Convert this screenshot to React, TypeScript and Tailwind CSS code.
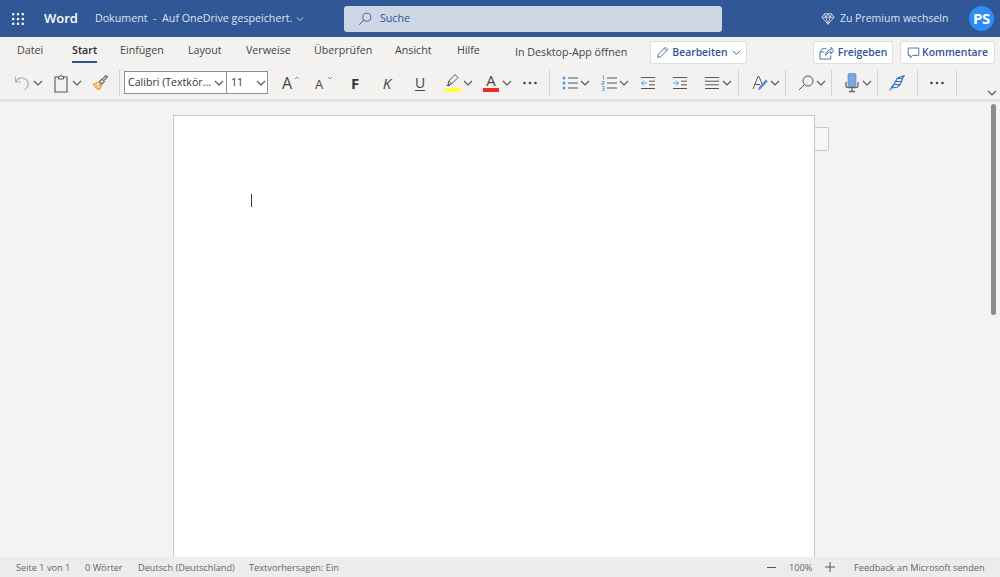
import React from 'react';

const font = { fontFamily: '"Open Sans", "Noto Sans", sans-serif' };

const Svg: React.FC<{ className?: string; children: React.ReactNode }> = ({ className = '', children }) => (
  <svg viewBox="0 0 16 16" fill="none" className={`w-4 h-4 shrink-0 ${className}`}>{children}</svg>
);

const Chev: React.FC<{ className?: string }> = ({ className = '' }) => (
  <svg viewBox="0 0 10 10" fill="none" className={`w-[10px] h-[10px] shrink-0 ${className}`}>
    <path d="M1 3l4 4 4-4" stroke="#555" strokeWidth="1.1" />
  </svg>
);

const Sep: React.FC<{ className?: string }> = ({ className = '' }) => (
  <div className={`w-px h-[26px] shrink-0 bg-[#d4d3d1] ${className}`} />
);

const Dots: React.FC<{ className?: string }> = ({ className = '' }) => (
  <Svg className={className}>
    <circle cx="2.5" cy="8" r="1.3" fill="#444" />
    <circle cx="8" cy="8" r="1.3" fill="#444" />
    <circle cx="13.5" cy="8" r="1.3" fill="#444" />
  </Svg>
);

const Tab: React.FC<{ label: string; className: string; active?: boolean }> = ({ label, className, active }) => (
  <div className={`shrink-0 text-[10.7px] leading-[16px] whitespace-nowrap ${active ? 'font-semibold text-[#2b2b2b]' : 'text-[#444]'} ${className}`}>
    <span className="relative inline-block">
      {label}
      {active && <span className="absolute left-0 right-0 top-[19px] h-[2px] bg-[#2f5597]" />}
    </span>
  </div>
);

const Lines: React.FC<{ x?: number }> = ({ x = 1 }) => (
  <>
    <path d="M1 2.5h14M1 13.5h14" stroke="#555" strokeWidth="1" />
    <path d={`M${x} 6.2h${15 - x}M${x} 9.8h${15 - x}`} stroke="#555" strokeWidth="1" />
  </>
);

export default function App() {
  return (
    <div className="w-[1000px] h-[577px] flex flex-col overflow-hidden bg-[#f3f3f3]" style={font}>
      {/* title bar */}
      <div className="h-[37px] shrink-0 bg-[#325796] flex items-center text-white">
        <svg viewBox="0 0 12 12" className="w-3 h-3 ml-3 shrink-0" fill="#fff">
          {[1.2, 6, 10.8].map(y => [1.2, 6, 10.8].map(x => <rect key={`${x}-${y}`} x={x - 1.1} y={y - 1.1} width="2.2" height="2.2" />))}
        </svg>
        <span className="ml-[20px] text-[13px] font-semibold leading-none">Word</span>
        <span className="ml-[17px] w-[198px] text-[10.7px] text-[#dbe3f0] whitespace-pre">Dokument  -  Auf OneDrive gespeichert.</span>
        <svg viewBox="0 0 10 10" fill="none" className="w-2 h-2 ml-[3px] shrink-0"><path d="M1 3l4 4 4-4" stroke="#dbe3f0" strokeWidth="1.1" /></svg>
        <div className="ml-[40px] w-[378px] h-[26px] rounded-[3px] bg-[#ced6e3] flex items-center shrink-0">
          <svg viewBox="0 0 16 16" fill="none" className="w-[14px] h-[14px] ml-[14px]">
            <circle cx="10" cy="6" r="4.6" stroke="#2f5597" strokeWidth="1" />
            <path d="M6.6 9.4L1.5 14.5" stroke="#2f5597" strokeWidth="1" />
          </svg>
          <span className="ml-[8px] text-[10.7px] text-[#2f5597]">Suche</span>
        </div>
        <svg viewBox="0 0 16 16" fill="none" className="w-[14px] h-[14px] ml-[99px] shrink-0">
          <path d="M4 2h8l3 4-7 8-7-8zM1 6h14M5.500 6L8 14l2.500-8M4 2l1.500 4L8 2l2.500 4L12 2" stroke="#e6ebf4" strokeWidth="0.9" />
        </svg>
        <span className="ml-[5px] w-[109px] text-[10.5px] text-[#dbe3f0] whitespace-nowrap">Zu Premium wechseln</span>
        <div className="ml-[20px] w-[25px] h-[25px] rounded-full bg-[#2f8cf5] flex items-center justify-center text-[15px] font-bold tracking-[-0.5px] shrink-0">PS</div>
      </div>

      {/* tabs */}
      <div className="h-[29px] shrink-0 bg-[#f3f2f1] flex items-start pt-[5px] pl-[17px]">
        <Tab label="Datei" className="w-[55px]" />
        <Tab label="Start" className="w-[48px]" active />
        <Tab label="Einfügen" className="w-[68px]" />
        <Tab label="Layout" className="w-[58px]" />
        <Tab label="Verweise" className="w-[68px]" />
        <Tab label="Überprüfen" className="w-[81px]" />
        <Tab label="Ansicht" className="w-[62px]" />
        <Tab label="Hilfe" className="w-[58px]" />
        <Tab label="In Desktop-App öffnen" className="w-[135px] mt-[2px]" />
        <div className="mt-[-1px] w-[97px] h-[23px] bg-white border border-[#dedede] rounded-[2px] flex items-center justify-center text-[10.4px] font-semibold text-[#2f5597] shrink-0">
          <svg viewBox="0 0 16 16" fill="none" className="w-[13px] h-[13px] mr-[3px]">
            <path d="M2 14l1-4 8.500-8.500 3 3L6 13z M10 3l3 3" stroke="#2f5597" strokeWidth="1" />
          </svg>
          Bearbeiten
          <svg viewBox="0 0 10 10" fill="none" className="w-[9px] h-[9px] ml-[4px]"><path d="M1 3l4 4 4-4" stroke="#2f5597" strokeWidth="1" /></svg>
        </div>
        <div className="ml-[66px] mt-[-1px] w-[80px] h-[23px] bg-white border border-[#dedede] rounded-[2px] flex items-center justify-center text-[10.4px] font-semibold text-[#2f5597] shrink-0">
          <svg viewBox="0 0 16 16" fill="none" className="w-[15px] h-[15px] mr-[4px]">
            <path d="M8 4H3.500L1 7.500V15h11.500v-4M1 7.500h4.500" stroke="#2f5597" strokeWidth="0.9" />
            <path d="M7 11c0-3.500 2.500-6 6-6V2.500L15.500 6 13 9.500V7.500c-2.500 0-4.500 1-6 3.500z" stroke="#2f5597" strokeWidth="0.9" />
          </svg>
          Freigeben
        </div>
        <div className="ml-[7px] mt-[-1px] w-[95px] h-[23px] bg-white border border-[#dedede] rounded-[2px] flex items-center justify-center text-[10.4px] font-semibold text-[#2f5597] shrink-0">
          <svg viewBox="0 0 16 16" fill="none" className="w-[13px] h-[13px] mr-[2px]">
            <path d="M1.500 2.500h13v9H7L4 14.500v-3H1.500z" stroke="#2f5597" strokeWidth="1" />
          </svg>
          Kommentare
        </div>
      </div>

      {/* ribbon */}
      <div className="h-[36px] shrink-0 bg-[#f3f2f1] border-b-[3px] border-[#e3e2e0] flex items-center pl-[14px]">
        <Svg>
          <path d="M1.500 1.500V7H7M1.800 7C3.500 3.500 6 2.500 9 3c4 .7 6 4.500 5 7.500-.5 1.800-2 3.500-3.500 4.500" stroke="#b3b1af" strokeWidth="1.200" />
        </Svg>
        <Chev className="ml-[3px]" />
        <svg viewBox="0 0 16 20" fill="none" className="w-[16px] h-[20px] ml-[10px] shrink-0">
          <path d="M5 4H2v15h12V4h-3" stroke="#555" strokeWidth="1.100" />
          <path d="M5.500 6V3.500h1.500c0-2 2-2 2 0h1.500V6z" stroke="#555" strokeWidth="1" />
        </svg>
        <Chev className="ml-[3px]" />
        <Svg className="ml-[10px]">
          <path d="M.5 9l6-2.500 4 4L7.500 15.500C4.500 14.500 2 12 .5 9z" fill="#f2a33c" />
          <path d="M2.500 10.500l4.500-1.500-2 4M5.500 8l2 5" stroke="#fff" strokeWidth="0.800" />
          <path d="M7.500 6.500l2.500-2.500 2.500 2.500L10 9zM11 3.500l3-3 1.500 1.500-3 3" stroke="#666" strokeWidth="1.100" />
        </Svg>
        <Sep className="ml-[11px]" />
        <div className="ml-[4px] w-[103px] h-[23px] bg-white border border-[#8f8f8f] flex items-center justify-between pl-[3px] pr-[2px] text-[10.6px] text-[#333] whitespace-nowrap shrink-0">
          <span>Calibri (Textkör...</span>
          <Chev />
        </div>
        <div className="ml-[-1px] w-[42px] h-[23px] bg-white border border-[#8f8f8f] flex items-center justify-between pl-[4px] pr-[1px] text-[10.6px] text-[#333] shrink-0">
          <span>11</span>
          <Chev />
        </div>
        <div className="ml-[14px] w-[18px] h-4 relative shrink-0 text-[16px] leading-4 text-[#444]">
          A
          <svg viewBox="0 0 6 4" fill="none" className="absolute right-0 top-[1px] w-[6px] h-[4px]"><path d="M1 3l2-2 2 2" stroke="#5a9bd8" strokeWidth="1" /></svg>
        </div>
        <div className="ml-[15px] w-[18px] h-4 relative shrink-0 text-[13px] leading-[18px] text-[#444]">
          A
          <svg viewBox="0 0 6 4" fill="none" className="absolute right-0 top-[1px] w-[6px] h-[4px]"><path d="M1 1l2 2 2-2" stroke="#5a9bd8" strokeWidth="1" /></svg>
        </div>
        <span className="ml-[14px] w-4 text-center text-[15px] font-bold leading-4 text-[#333] shrink-0">F</span>
        <span className="ml-[16px] w-4 text-center text-[15px] italic leading-4 text-[#444] shrink-0">K</span>
        <span className="ml-[17px] w-4 text-center text-[14px] leading-4 text-[#444] underline underline-offset-2 shrink-0">U</span>
        <div className="ml-[17px] w-4 h-[19px] flex flex-col items-center justify-between shrink-0">
          <svg viewBox="0 0 16 13" fill="none" className="w-4 h-[13px]">
            <path d="M3 11.500l.8-3.500L10 1.500l3 3-6.500 6.500z M3.800 8l3 3M1.500 12.500h3.500" stroke="#555" strokeWidth="1" />
          </svg>
          <div className="w-4 h-[4px] bg-[#ffff3d]" />
        </div>
        <Chev className="ml-[2px]" />
        <div className="ml-[10px] w-4 h-[19px] flex flex-col items-center justify-between shrink-0">
          <span className="text-[15px] leading-[15px] text-[#444]">A</span>
          <div className="w-4 h-[4px] bg-[#ee2a24]" />
        </div>
        <Chev className="ml-[3px]" />
        <Dots className="ml-[10px]" />
        <Sep className="ml-[11px]" />
        <Svg className="ml-[12px]">
          <circle cx="2" cy="3" r="1.500" fill="#4f9be0" />
          <circle cx="2" cy="8" r="1.500" fill="#4f9be0" />
          <circle cx="2" cy="13" r="1.500" fill="#4f9be0" />
          <path d="M6 3h10M6 8h10M6 13h10" stroke="#555" strokeWidth="1" />
        </Svg>
        <Chev className="ml-[2px]" />
        <Svg className="ml-[11px]">
          <path d="M1.500 1l1-.5v4M.8 6.500h2.400v1.500H.8v1.500h2.500M.8 11.500h2.400v4H.8M1.500 13.500h1.700" stroke="#4f9be0" strokeWidth="0.800" />
          <path d="M6 3h10M6 8h10M6 13h10" stroke="#555" strokeWidth="1" />
        </Svg>
        <Chev className="ml-[2px]" />
        <Svg className="ml-[11px]">
          <Lines x={9} />
          <path d="M7 8H1.500M4 5.500L1.500 8 4 10.500" stroke="#4f9be0" strokeWidth="1" />
        </Svg>
        <Svg className="ml-[16px]">
          <Lines x={9} />
          <path d="M1 8h5.500M4 5.500L6.500 8 4 10.500" stroke="#4f9be0" strokeWidth="1" />
        </Svg>
        <Svg className="ml-[16px]">
          <Lines />
        </Svg>
        <Chev className="ml-[2px]" />
        <Sep className="ml-[6px]" />
        <Svg className="ml-[13px]">
          <path d="M1 14L6 1.500h1L11 11M3 9.500h5" stroke="#555" strokeWidth="1" />
          <path d="M6 15.500l1-3.500 7-7.500 1.800 1.800-7 7.500z" fill="#4f8fd0" />
        </Svg>
        <Chev className="ml-[2px]" />
        <Sep className="ml-[5px]" />
        <Svg className="ml-[12px]">
          <circle cx="10" cy="6" r="5" stroke="#555" strokeWidth="1" />
          <path d="M6.400 9.600L1 15" stroke="#555" strokeWidth="1" />
        </Svg>
        <Chev className="ml-[2px]" />
        <Sep className="ml-[5px]" />
        <svg viewBox="0 0 16 20" fill="none" className="w-4 h-5 ml-[12px] shrink-0">
          <rect x="4" y="0.500" width="8" height="13" rx="1.500" fill="#78a9e0" stroke="#4d7fb8" strokeWidth="0.600" />
          <path d="M2 9v3.500c0 1 1 2 2 2h8c1 0 2-1 2-2V9M8 14.500V18M5 18.500h6" stroke="#666" strokeWidth="1.300" />
        </svg>
        <Chev className="ml-[2px]" />
        <Sep className="ml-[5px]" />
        <Svg className="ml-[11px]">
          <path d="M.8 15.500L4 10" stroke="#2f6fc4" strokeWidth="1.100" />
          <path d="M3 13L8.500 3 15 .8 13.500 3.500H8M13.500 3.500l-1 3H6.500M12.500 6.500l-1.500 3H5M11 9.500l-2.500 2.500L3 13" stroke="#2f6fc4" strokeWidth="1.200" />
        </Svg>
        <Sep className="ml-[12px]" />
        <Dots className="ml-[11px]" />
        <Sep className="ml-[11px]" />
        <Chev className="ml-[30px] mt-[20px]" />
      </div>

      {/* document area */}
      <div className="relative flex-1 min-h-0 flex items-start pl-[173px] pt-[13px] overflow-hidden">
        <div className="w-[642px] h-[600px] shrink-0 bg-white border border-[#c6c6c6] pl-[77px] pt-[78px]">
          <div className="w-px h-[13px] bg-[#333]" />
        </div>
        <div className="w-[14px] h-[24px] mt-[12px] shrink-0 bg-[#f6f6f6] border border-l-0 border-[#c9c9c9] rounded-r-[2px]" />
        <div className="absolute right-[4px] top-[2px] w-[5px] h-[211px] rounded-full bg-[#8b8b8b]" />
      </div>

      {/* status bar */}
      <div className="h-[20px] shrink-0 bg-[#ececec] flex items-center pt-[1px] text-[9.2px] text-[#666] whitespace-nowrap">
        <span className="ml-[16px] w-[55px]">Seite 1 von 1</span>
        <span className="ml-[14px] w-[39px]">0 Wörter</span>
        <span className="ml-[14px] w-[97px]">Deutsch (Deutschland)</span>
        <span className="ml-[14px]">Textvorhersagen: Ein</span>
        <div className="ml-auto flex items-center">
          <div className="w-[9px] h-px bg-[#555]" />
          <span className="ml-[13px] w-[24px]">100%</span>
          <svg viewBox="0 0 10 10" className="ml-[12px] w-[10px] h-[10px]" fill="none"><path d="M5 0v10M0 5h10" stroke="#555" strokeWidth="1" /></svg>
          <span className="ml-[19px] w-[130px] mr-[16px]">Feedback an Microsoft senden</span>
        </div>
      </div>
    </div>
  );
}
